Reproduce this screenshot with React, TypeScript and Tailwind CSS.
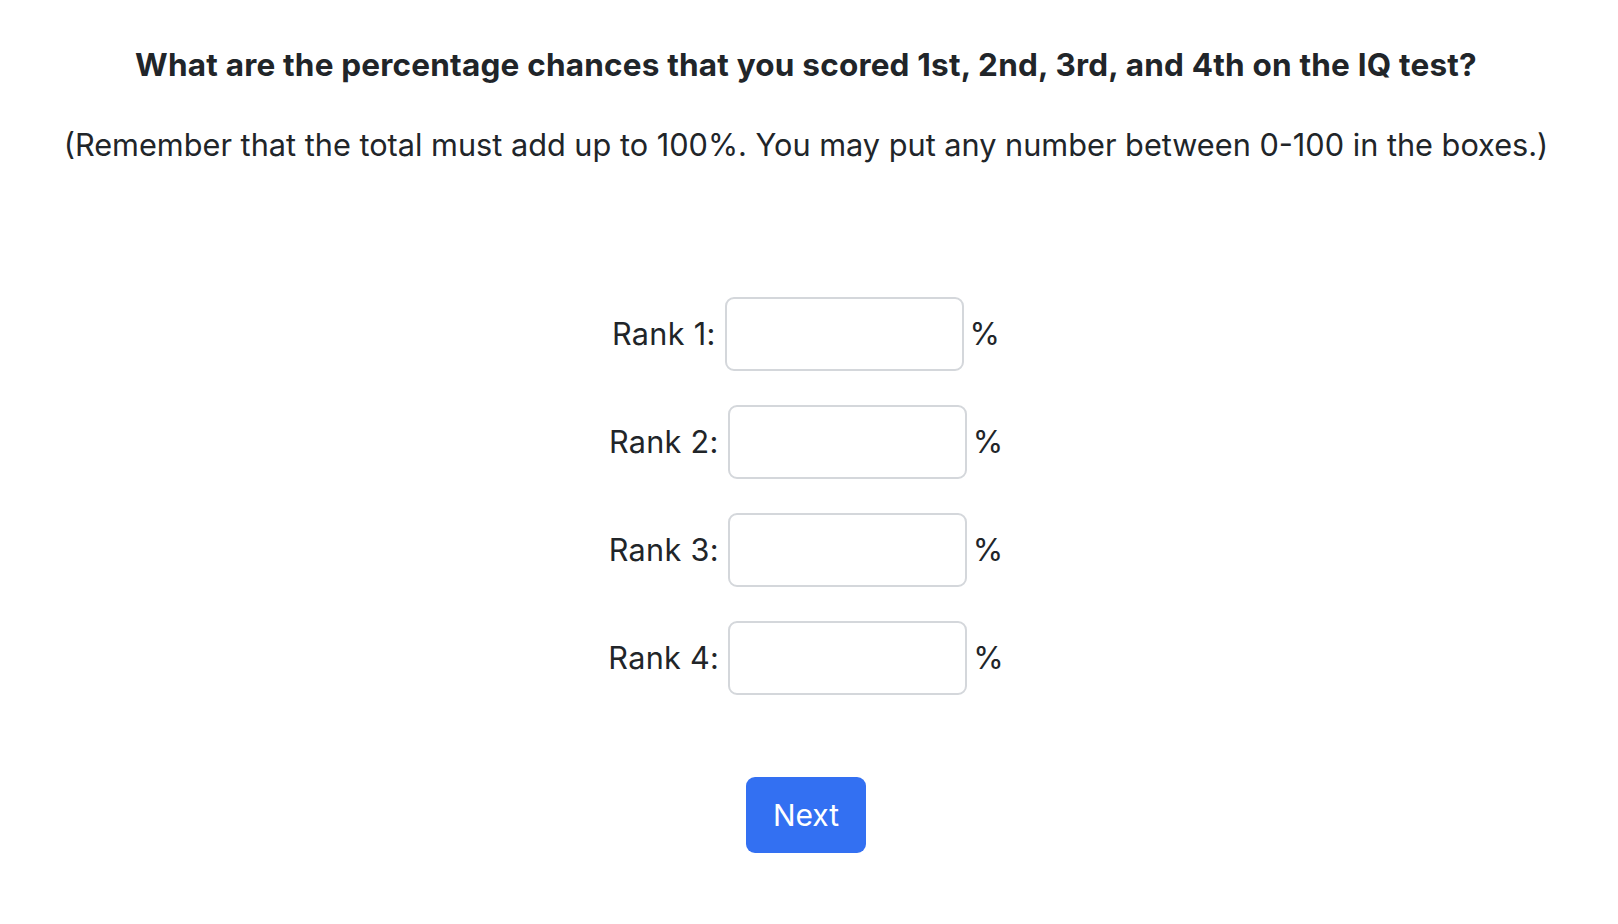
import React from "react";

const ranks = [1, 2, 3, 4];

export default function App() {
  return (
    <div className="min-h-screen bg-white text-[#212529] font-['Inter','Noto_Sans',sans-serif] text-center pt-[46px] pr-[6px]">
      <h1 className="text-[31.5px] font-bold leading-[38px] tracking-[0.2px]">
        What are the percentage chances that you scored 1st, 2nd, 3rd, and 4th on the IQ test?
      </h1>
      <p className="mt-[42px] text-[30.7px] leading-[37px]">
        (Remember that the total must add up to 100%. You may put any number between 0-100 in the boxes.)
      </p>
      <div className="mt-[134px] flex flex-col items-center gap-[34px]">
        {ranks.map((r) => (
          <div key={r} className="flex items-center">
            <label className="text-[30.6px] leading-[36px] tracking-[0.3px]">Rank {r}:</label>
            <input
              type="text"
              className="ml-[9px] w-[239px] h-[74px] border-2 border-[#d4d7db] rounded-[9px] bg-white outline-none px-4 text-[30px]"
            />
            <span className="ml-[6px] text-[31px] leading-[36px]">%</span>
          </div>
        ))}
      </div>
      <button className="mt-[82px] w-[120px] h-[76px] rounded-[9px] bg-[#3370f2] text-white text-[30px] leading-[36px]">
        Next
      </button>
    </div>
  );
}
